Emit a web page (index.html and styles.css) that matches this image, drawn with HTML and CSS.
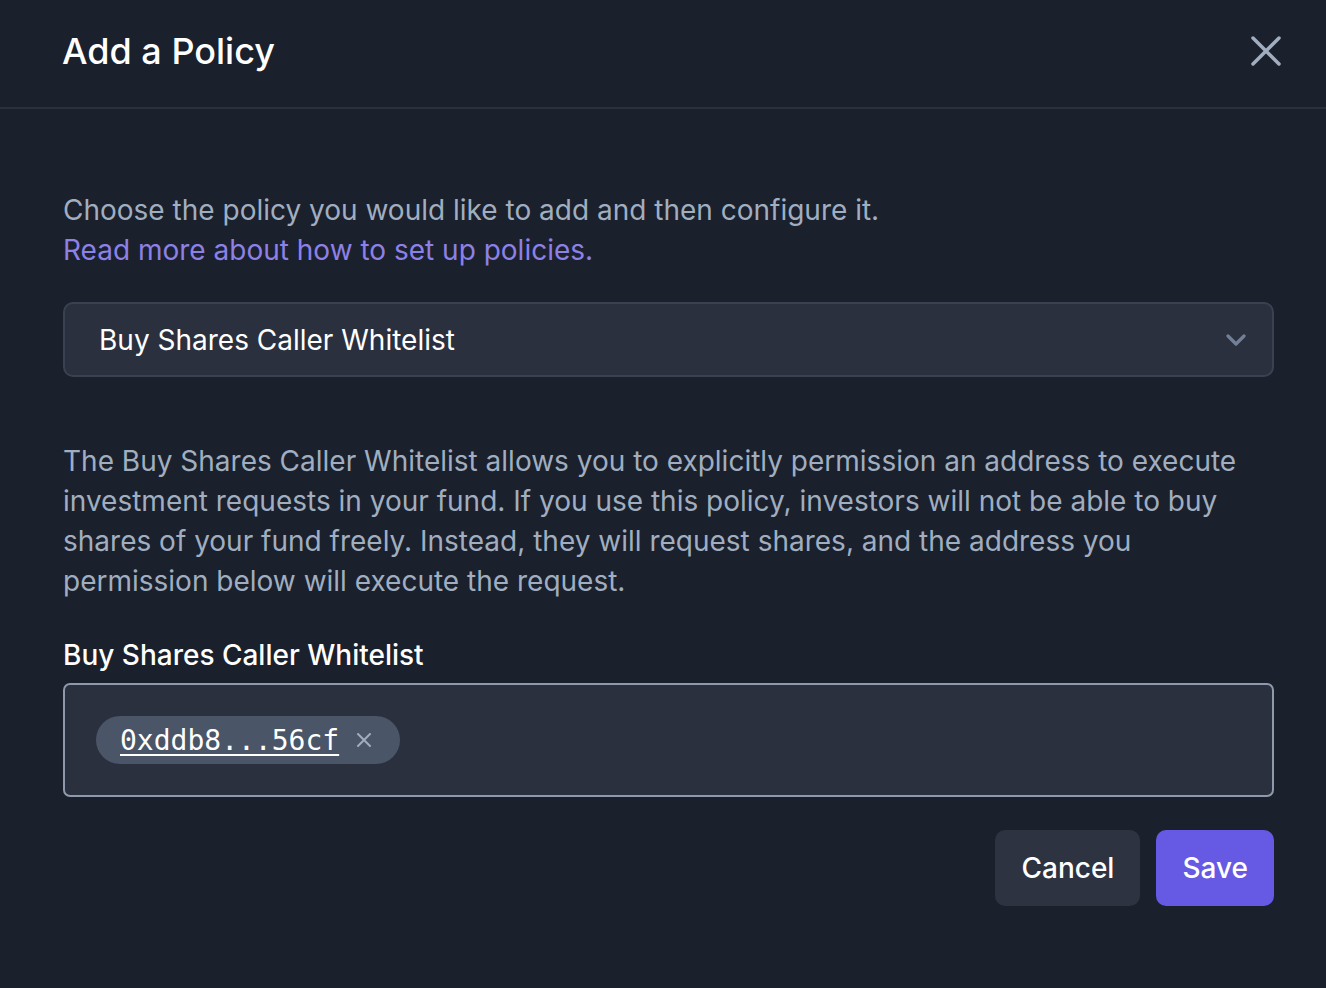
FILE: index.html
```html
<!DOCTYPE html>
<html>
<head>
<meta charset="utf-8">
<link rel="stylesheet" href="styles.css">
</head>
<body>
<div class="modal">
  <header class="modal-header">
    <h1 class="title">Add a Policy</h1>
    <button class="close" aria-label="Close">
      <svg width="30" height="30" viewBox="0 0 30 30"><path d="M2 2 L28 28 M28 2 L2 28" stroke="#a0aec0" stroke-width="3.5" stroke-linecap="round"/></svg>
    </button>
  </header>
  <div class="modal-body">
    <p class="intro">Choose the policy you would like to add and then configure it.<br><a class="link" href="#">Read more about how to set up policies.</a></p>
    <div class="select">
      <span>Buy Shares Caller Whitelist</span>
      <svg class="chev" width="20" height="12" viewBox="0 0 20 12"><path d="M2 2 L10 10 L18 2" fill="none" stroke="#718096" stroke-width="3.2" stroke-linecap="round" stroke-linejoin="round"/></svg>
    </div>
    <p class="desc">The Buy Shares Caller Whitelist allows you to explicitly permission an address to execute investment requests in your fund. If you use this policy, investors will not be able to buy shares of your fund freely. Instead, they will request shares, and the address you permission below will execute the request.</p>
    <label class="label">Buy Shares Caller Whitelist</label>
    <div class="tag-input">
      <span class="tag">
        <span class="tag-text">0xddb8...56cf</span>
        <svg width="16" height="16" viewBox="0 0 16 16"><path d="M2 2 L14 14 M14 2 L2 14" stroke="#a0aec0" stroke-width="2" stroke-linecap="round"/></svg>
      </span>
    </div>
    <div class="actions">
      <button class="btn btn-cancel">Cancel</button>
      <button class="btn btn-save">Save</button>
    </div>
  </div>
</div>
</body>
</html>
```
FILE: styles.css
```css
* { box-sizing: border-box; }
html, body { margin: 0; padding: 0; }
body {
  background: #1a202c;
  font-family: Inter, "Noto Sans", sans-serif;
  color: #fff;
  width: 1326px;
  height: 988px;
  overflow: hidden;
}
.modal { width: 1326px; }
.modal-header {
  height: 109px;
  border-bottom: 2px solid #2a303d;
  display: flex;
  align-items: center;
  justify-content: space-between;
  padding: 0 45px 6px 62px;
}
.title {
  margin: 0;
  font-size: 36px;
  font-weight: 500;
  color: #fff;
}
.close {
  background: none;
  border: 0;
  padding: 0;
  width: 30px;
  height: 30px;
  display: flex;
}
.modal-body {
  padding: 81px 52px 0 63px;
}
.intro {
  margin: 0;
  font-size: 28px;
  line-height: 40px;
  color: #a0aec0;
}
.link { color: #8d80e6; text-decoration: none; }
.select {
  margin-top: 32px;
  height: 75px;
  border: 2px solid #3a4252;
  border-radius: 10px;
  background: #2a303e;
  display: flex;
  align-items: center;
  justify-content: space-between;
  padding: 0 26px 0 34px;
  font-size: 28px;
  color: #fff;
}
.desc {
  margin: 64px 0 0;
  font-size: 28px;
  line-height: 40px;
  color: #a0aec0;
}
.label {
  display: block;
  margin-top: 34px;
  font-size: 28px;
  font-weight: 500;
  line-height: 40px;
  color: #fff;
}
.tag-input {
  margin-top: 8px;
  height: 114px;
  border: 2px solid #8e9aab;
  border-radius: 7px;
  background: #2a303d;
  display: flex;
  align-items: center;
  padding: 0 31px;
}
.tag {
  display: inline-flex;
  align-items: center;
  gap: 17px;
  height: 48px;
  padding: 0 28px 0 24px;
  border-radius: 24px;
  background: #4a5568;
}
.tag-text {
  font-family: "DejaVu Sans Mono", monospace;
  font-size: 28px;
  color: #fff;
  text-decoration: underline;
  text-underline-offset: 4px;
  text-decoration-thickness: 2px;
}
.actions {
  margin-top: 33px;
  display: flex;
  justify-content: flex-end;
  gap: 16px;
}
.btn {
  height: 76px;
  border: 0;
  border-radius: 10px;
  font-family: Inter, sans-serif;
  font-size: 28px;
  font-weight: 500;
  color: #fff;
  padding: 0 26px;
}
.btn-cancel { background: #2d3340; }
.btn-save { background: #6659e3; padding: 0 26px; }
```
